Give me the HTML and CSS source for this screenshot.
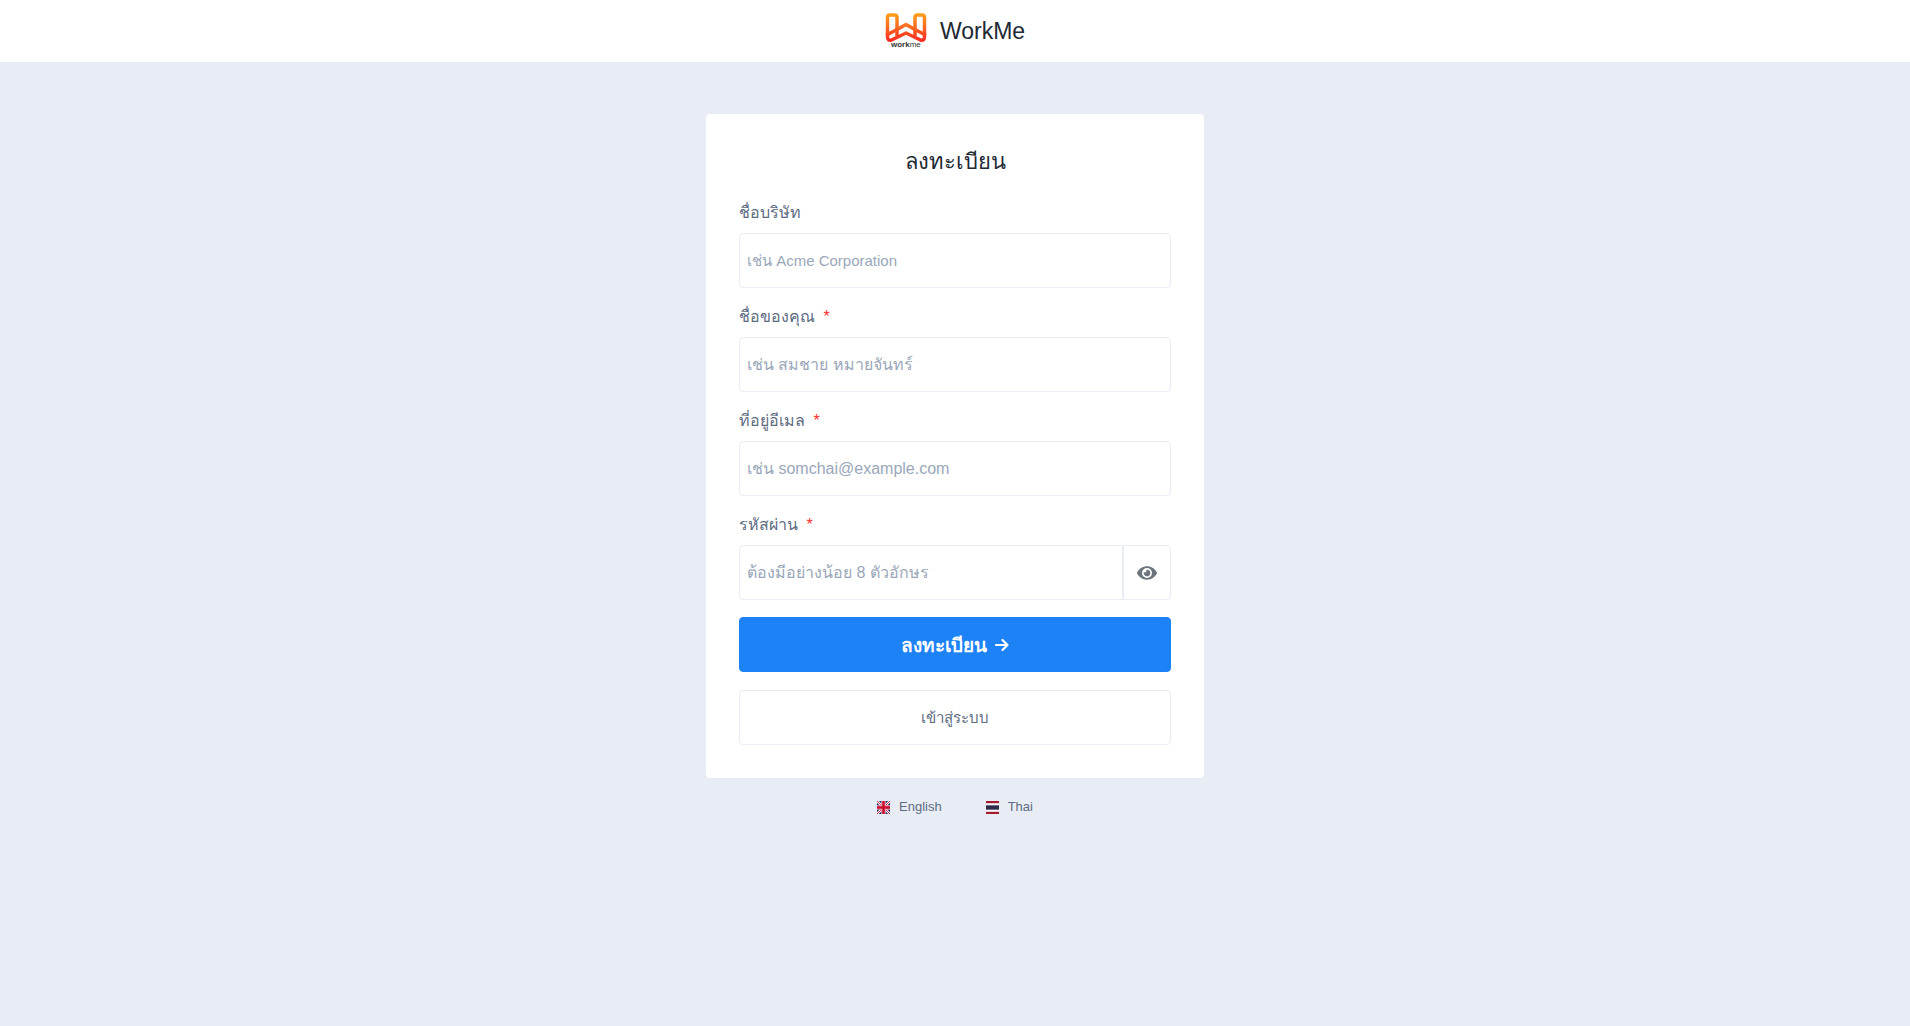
FILE: index.html
```html
<!DOCTYPE html>
<html lang="th">
<head>
    <meta charset="UTF-8">
    <meta name="viewport" content="width=device-width, initial-scale=1.0">
    <title>WorkMe</title>
    <link rel="stylesheet" href="styles.css">
    <script>
        function togglePassword() {
            let passwordField = document.getElementById("password");
            passwordField.type = passwordField.type === "password" ? "text" : "password";
        }
    </script>
</head>
<body>
    <header class="header">
        <a href="#" class="brand">
            <svg class="brand-logo" viewBox="0 0 42 36" aria-hidden="true">
                <defs>
                    <linearGradient id="flame" gradientUnits="userSpaceOnUse" x1="0" y1="0" x2="0" y2="28">
                        <stop offset="0" stop-color="#fca31c"/>
                        <stop offset="0.5" stop-color="#fb6a20"/>
                        <stop offset="1" stop-color="#f92a22"/>
                    </linearGradient>
                </defs>
                <g fill="none" stroke="url(#flame)" stroke-width="3.500" stroke-linejoin="round">
                    <path d="M5 2H9.500Q12 2 12 4.500V16.500L2.500 21.500V4.500Q2.500 2 5 2Z"/>
                    <path d="M37 2H32.500Q30 2 30 4.500V16.500L39.500 21.500V4.500Q39.500 2 37 2Z"/>
                    <path d="M12 16.500L21 11.500L30 16.500"/>
                    <path d="M2.500 20V24Q2.500 28 6.500 27L21 20L35.500 27Q39.500 28 39.500 24V20"/>
                    <path d="M12 15V23M30 15V23"/>
                </g>
                <text class="logo-text" x="6" y="34"><tspan class="logo-bold">work</tspan>me</text>
            </svg>
            <span>WorkMe</span>
        </a>
    </header>

    <main class="page">
        <div class="card">
            <h1>ลงทะเบียน</h1>
            <form>
                <div class="form-group">
                    <label for="company">ชื่อบริษัท</label>
                    <input type="text" id="company" class="input-small" placeholder="เช่น Acme Corporation">
                </div>
                <div class="form-group">
                    <label for="name">ชื่อของคุณ <span class="required">*</span></label>
                    <input type="text" id="name" placeholder="เช่น สมชาย หมายจันทร์" required>
                </div>
                <div class="form-group">
                    <label for="email">ที่อยู่อีเมล <span class="required">*</span></label>
                    <input type="email" id="email" placeholder="เช่น somchai@example.com" required>
                </div>
                <div class="form-group">
                    <label for="password">รหัสผ่าน <span class="required">*</span></label>
                    <div class="input-group">
                        <input type="password" id="password" placeholder="ต้องมีอย่างน้อย 8 ตัวอักษร" required>
                        <button type="button" class="toggle-password" aria-label="แสดงรหัสผ่าน" onclick="togglePassword()">
                            <svg viewBox="0 0 576 512" width="20" height="18" fill="currentColor"><path d="M572.520 241.400C518.290 135.590 410.930 64 288 64S57.680 135.640 3.480 241.410a32.350 32.350 0 0 0 0 29.190C57.710 376.410 165.070 448 288 448s230.320-71.640 284.520-177.410a32.350 32.350 0 0 0 0-29.190zM288 400a144 144 0 1 1 144-144 143.930 143.930 0 0 1-144 144zm0-240a95.310 95.310 0 0 0-25.310 3.790 47.850 47.850 0 0 1-66.900 66.900A95.780 95.780 0 1 0 288 160z"/></svg>
                        </button>
                    </div>
                </div>
                <button type="submit" class="btn btn-primary">
                    ลงทะเบียน
                    <svg viewBox="0 0 14 14" width="14" height="14" fill="none" stroke="currentColor" stroke-width="2.200" stroke-linecap="round" stroke-linejoin="round"><path d="M1 7H12.500M7.500 2L12.500 7L7.500 12"/></svg>
                </button>
                <a href="#" class="btn btn-outline">เข้าสู่ระบบ</a>
            </form>
        </div>

        <nav class="languages">
            <a href="#">
                <svg class="flag" viewBox="0 0 26 26" aria-hidden="true">
                    <path fill="#1d2d6b" d="M0 0H26V26H0Z"/>
                    <path stroke="#fff" stroke-width="5" d="M0 0L26 26M26 0L0 26"/>
                    <path stroke="#d22c4a" stroke-width="2" d="M0 0L26 26M26 0L0 26"/>
                    <path stroke="#e9a3b4" stroke-width="9" d="M13 0V26M0 13H26"/>
                    <path stroke="#c8102e" stroke-width="5" d="M13 0V26M0 13H26"/>
                </svg>
                English
            </a>
            <a href="#">
                <svg class="flag" viewBox="0 0 12 12" aria-hidden="true">
                    <path fill="#a51931" d="M0 0H12V12H0Z"/>
                    <path fill="#f4f5f8" d="M0 2H12V10H0Z"/>
                    <path fill="#2d2a4a" d="M0 4H12V8H0Z"/>
                </svg>
                Thai
            </a>
        </nav>
    </main>
</body>
</html>
```
FILE: styles.css
```css
* {
    box-sizing: border-box;
}
body {
    margin: 0;
    min-height: 100vh;
    background-color: #e8edf5;
    color: #212934;
    font-family: "Liberation Sans", Arial, sans-serif;
    font-size: 16px;
    line-height: 24px;
}
a {
    color: inherit;
    text-decoration: none;
}
.header {
    display: flex;
    justify-content: center;
    align-items: center;
    height: 62px;
    background: white;
}
.brand {
    display: flex;
    align-items: center;
    gap: 13px;
    font-size: 23px;
}
.brand-logo {
    width: 42px;
    height: 36px;
}
.logo-text {
    font-size: 8px;
    fill: #333;
}
.logo-bold {
    font-weight: bold;
}
.page {
    padding: 52px 16px;
}
.card {
    max-width: 498px;
    margin: 0 auto;
    padding: 33px;
    background: white;
    border-radius: 4px;
}
h1 {
    margin: 0 0 24px;
    text-align: center;
    font-size: 22px;
    font-weight: normal;
    line-height: 30px;
}
.form-group {
    margin-bottom: 17px;
}
label {
    display: block;
    margin-bottom: 8px;
    color: #5d6b82;
}
.required {
    margin-left: 4px;
    color: #f9302c;
    line-height: 16px;
}
input {
    display: block;
    width: 100%;
    height: 55px;
    padding: 0 7px;
    border: 1px solid #e8edf5;
    border-radius: 4px;
    background: white;
    color: #212934;
    font-family: inherit;
    font-size: 16px;
}
input::placeholder {
    color: #9aa7ba;
    opacity: 1;
}
.input-small {
    font-size: 15px;
}
.input-group {
    display: flex;
}
.input-group input {
    flex: 1;
    border-radius: 4px 0 0 4px;
}
.toggle-password {
    display: flex;
    justify-content: center;
    align-items: center;
    width: 48px;
    padding: 0;
    border: 1px solid #e8edf5;
    border-radius: 0 4px 4px 0;
    background: white;
    color: #6c757d;
    cursor: pointer;
}
.btn {
    display: flex;
    justify-content: center;
    align-items: center;
    gap: 8px;
    width: 100%;
    height: 55px;
    border: 1px solid #e8edf5;
    border-radius: 4px;
    font-family: inherit;
    font-size: 15px;
    cursor: pointer;
}
.btn-primary {
    margin-bottom: 18px;
    border-color: #1e82f7;
    background: #1e82f7;
    color: white;
    font-size: 19px;
    font-weight: bold;
}
.btn-outline {
    color: #5d6b82;
}
.languages {
    display: flex;
    justify-content: center;
    gap: 44px;
    margin-top: 17px;
    color: #5d6b82;
    font-size: 13px;
}
.languages a {
    display: flex;
    align-items: center;
    gap: 9px;
}
.flag {
    width: 13px;
    height: 13px;
}
```
